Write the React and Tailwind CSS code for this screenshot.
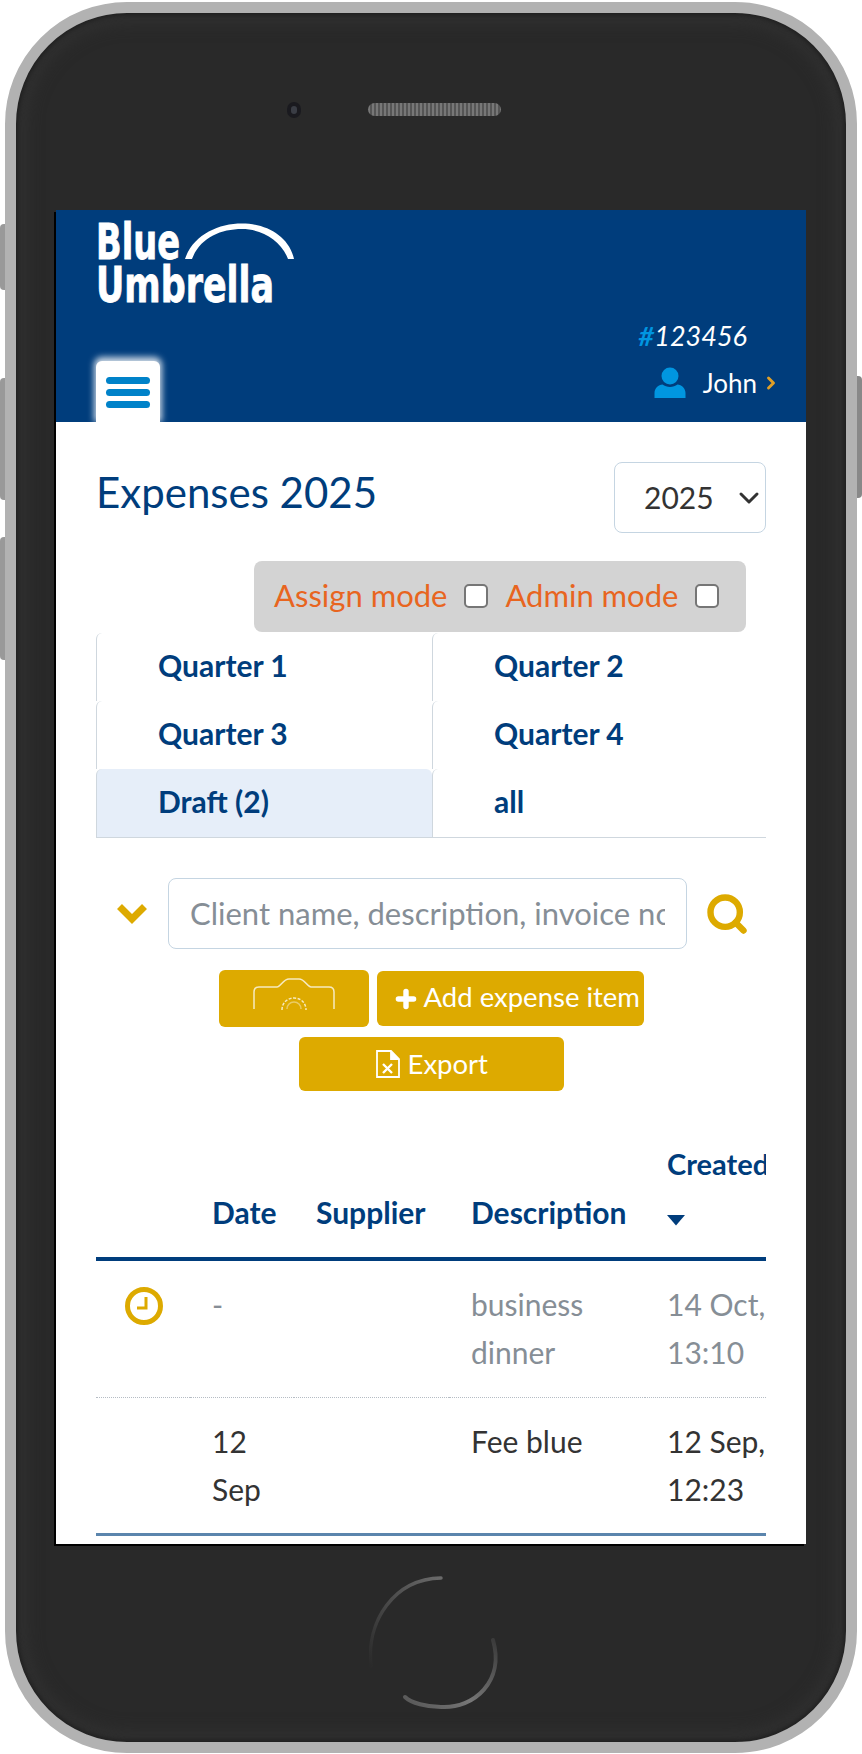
import { ChevronDown, Plus, Search } from "lucide-react";

const font = { fontFamily: '"Lato", "Noto Sans", sans-serif' };

function Logo() {
  return (
    <svg width="200" height="82" viewBox="0 0 200 82" className="block overflow-visible" aria-label="Blue Umbrella">
      <text x="0" y="36" fontFamily="Liberation Sans Narrow, DejaVu Sans Condensed, Liberation Sans" fontWeight="700" fontSize="49" fill="#fff" stroke="#fff" strokeWidth="0.8" textLength="84" lengthAdjust="spacingAndGlyphs">Blue</text>
      <text x="0" y="79" fontFamily="Liberation Sans Narrow, DejaVu Sans Condensed, Liberation Sans" fontWeight="700" fontSize="49" fill="#fff" stroke="#fff" strokeWidth="0.8" textLength="178" lengthAdjust="spacingAndGlyphs">Umbrella</text>
      <path d="M89 36C97 12 122 0.5 146 0.5C170 0.5 193 13 198 36H192C185 17 165 6 146 6C124 6 104 15 96 36Z" fill="#fff" />
    </svg>
  );
}

function Hamburger() {
  return (
    <div className="flex h-[61px] w-16 flex-col gap-[5px] rounded-t-md bg-white px-2.5 pt-4 shadow-[0_-2px_6px_2px_rgba(255,255,255,0.8)]">
      <div className="h-[7px] rounded-full bg-[#0082c9]" />
      <div className="h-[7px] rounded-full bg-[#0082c9]" />
      <div className="h-[7px] rounded-full bg-[#0082c9]" />
    </div>
  );
}

function UserIcon() {
  return (
    <svg width="32" height="32" viewBox="0 0 32 32" fill="#0096e0">
      <circle cx="16" cy="9" r="8.5" />
      <path d="M0.5 31v-5c0-5 4-8 8-8.5 2 1.6 4.800 2.500 7.500 2.500s5.500-.9 7.500-2.500c4 .5 8 3.500 8 8.500v5z" />
    </svg>
  );
}

function Tab({ label, active }) {
  return (
    <div className={`flex h-[68px] items-center rounded-tl-md border-l border-[#cfd7de] pb-[3px] pl-[61px] text-[30px] font-bold text-[#003d7c] ${active ? "rounded-t-md bg-[#e6eef9]" : ""}`}>
      {label}
    </div>
  );
}

function CameraIcon() {
  return (
    <svg width="82" height="34" viewBox="0 0 82 34" fill="none" stroke="#fff" strokeOpacity="0.75" strokeWidth="1.500">
      <path d="M1 31V14c0-3 1.500-5 5-5h18c4 0 6-8 12-8h10c6 0 8 8 12 8h18c3 0 5 2 5 5v17" />
      <path d="M29 32c0-7 5-12 12-12s12 5 12 12" strokeDasharray="3 1.500" />
      <path d="M34 31c0-4 3-7 7-7s7 3 7 7" strokeOpacity="0.4" />
    </svg>
  );
}

function FileIcon() {
  return (
    <svg width="24" height="28" viewBox="0 0 24 28" fill="none" stroke="#fff" strokeWidth="1.800">
      <path d="M1 1h14l8 8v18H1z" />
      <path d="M15 1v8h8" fill="#fff" />
      <path d="M7 14l9 9M16 14l-9 9" strokeWidth="2.400" />
    </svg>
  );
}

function ClockIcon() {
  return (
    <svg width="38" height="38" viewBox="0 0 38 38" fill="none" stroke="#ddaa00" className="ml-[7px] mt-[7px]">
      <circle cx="19" cy="19" r="16.500" strokeWidth="5" />
      <path d="M21 10v11h-9" strokeWidth="3" />
    </svg>
  );
}

function HomeButton() {
  return (
    <svg width="132" height="134" viewBox="0 0 132 134" fill="none" strokeLinecap="round">
      <defs>
        <linearGradient id="homeA" x1="0" y1="1" x2="1" y2="0">
          <stop offset="0" stopColor="#2a2a2a" />
          <stop offset="1" stopColor="#6a6a6a" />
        </linearGradient>
        <linearGradient id="homeB" x1="1" y1="0" x2="0" y2="1">
          <stop offset="0" stopColor="#3a3a3a" />
          <stop offset="0.6" stopColor="#777" />
          <stop offset="1" stopColor="#555" />
        </linearGradient>
      </defs>
      <path d="M2 90C-3 45 25 3 72 2" stroke="url(#homeA)" strokeWidth="3.500" />
      <path d="M124 64C136 105 105 133 72 131C58 131 42 127 36 121" stroke="url(#homeB)" strokeWidth="4" />
    </svg>
  );
}

const cell = "px-[22px] align-top";
const head = "border-b-4 border-[#003d7c] pb-[21px] pl-[22px] pr-[22px] align-bottom text-left font-bold leading-[48px] text-[#003d7c]";

export default function App() {
  return (
    <div className="relative h-[1754px] w-[862px] bg-white" style={font}>
      {/* side buttons */}
      <div className="absolute left-0 top-[224px] h-[66px] w-[6px] rounded-l-sm bg-[#999]" />
      <div className="absolute left-0 top-[378px] h-[122px] w-[6px] rounded-l-sm bg-[#999]" />
      <div className="absolute left-0 top-[537px] h-[123px] w-[6px] rounded-l-sm bg-[#999]" />
      <div className="absolute right-0 top-[376px] h-[122px] w-[8px] rounded-r-sm bg-[#888]" />

      {/* phone body */}
      <div className="absolute left-[5px] top-[2px] h-[1751px] w-[852px] rounded-[122px] border-[11px] border-[#b2b2b2] bg-[#292929] shadow-[inset_0_0_5px_2px_#1e1e1e,inset_0_0_18px_8px_#333]">
        <div className="flex h-[197px] items-start justify-center pr-[74px] pt-[88px]">
          <div className="mr-[67px] mt-[1px] h-[16px] w-[14px] rounded-full bg-[#1a1a1f] p-[4px]">
            <div className="h-full w-full rounded-full bg-[#3a3d45]" />
          </div>
          <div className="mt-[2px] h-[13px] w-[133px] rounded-full bg-[repeating-linear-gradient(90deg,#777_0,#777_2px,#555_2px,#555_4px)]" />
        </div>

        {/* screen */}
        <div className="mx-[40px] h-[1334px] overflow-hidden bg-white shadow-[-2px_2px_0_#000]">
          <header className="flex h-[212px] justify-between bg-[#003d7c] pl-10 pr-[25px] pt-[13px]">
            <div className="flex flex-col justify-between">
              <Logo />
              <Hamburger />
            </div>
            <div className="flex flex-col items-end justify-end pb-[23px]">
              <div className="mr-[34px] text-[27px] italic leading-[36px] text-white">
                <span className="font-bold text-[#0096e0]">#</span>123456
              </div>
              <div className="mt-[13px] flex items-center">
                <UserIcon />
                <span className="ml-[17px] text-[26px] leading-8 text-white">John</span>
                <ChevronDown className="ml-[4px] -rotate-90 text-[#e09f27]" size={20} strokeWidth={3.500} />
              </div>
            </div>
          </header>

          <main className="px-10 pt-10">
            <div className="flex items-start justify-between">
              <h1 className="mt-[2px] text-[42px] font-normal leading-[56px] text-[#003d7c]">Expenses 2025</h1>
              <div className="flex h-[71px] w-[152px] items-center justify-between rounded-lg border border-[#c5d5e2] pl-[29px] text-[30px] text-[#333]">
                2025
                <ChevronDown size={32} strokeWidth={2.250} />
              </div>
            </div>

            <div className="mr-5 mt-7 flex justify-end">
              <div className="flex h-[71px] w-[492px] items-center rounded-lg bg-[#d3d3d3] pb-[2px] pl-5 text-[31px] text-[#e8651f]">
                <span>Assign mode</span>
                <span className="ml-[17px] h-6 w-6 rounded-[5px] border-2 border-[#767676] bg-white" />
                <span className="ml-[17px]">Admin mode</span>
                <span className="ml-[17px] h-6 w-6 rounded-[5px] border-2 border-[#767676] bg-white" />
              </div>
            </div>

            <div className="mt-px grid grid-cols-[336px_1fr] border-b border-[#cfd7de]">
              <Tab label="Quarter 1" />
              <Tab label="Quarter 2" />
              <Tab label="Quarter 3" />
              <Tab label="Quarter 4" />
              <Tab label="Draft (2)" active />
              <Tab label="all" />
            </div>

            <div className="mt-10 flex items-center">
              <svg width="30" height="20" viewBox="0 0 30 20" fill="none" stroke="#ddaa00" strokeWidth="7" className="ml-[21px] shrink-0">
                <path d="M2.500 2.500L15 15L27.500 2.500" />
              </svg>
              <div className="ml-[21px] flex h-[71px] w-[519px] shrink-0 items-center rounded-lg border border-[#c5d5e2] pl-[21px] pr-[21px]">
                <span className="min-w-0 overflow-hidden whitespace-nowrap text-[31px] text-[#868e96]">Client name, description, invoice no</span>
              </div>
              <Search className="ml-[18px] shrink-0 text-[#ddaa00]" size={44} strokeWidth={3.500} />
            </div>

            <div className="mt-[21px] flex items-center justify-center gap-2">
              <button className="flex h-[57px] w-[150px] items-start justify-center rounded-md bg-[#ddaa00] pt-[8px]">
                <CameraIcon />
              </button>
              <button className="flex h-[55px] w-[267px] items-center rounded-md bg-[#ddaa00] pl-4 text-[27.500px] text-white">
                <Plus size={26} strokeWidth={5} />
                <span className="mb-[3px] ml-[5px]">Add expense item</span>
              </button>
            </div>
            <div className="mt-[10px] flex justify-center">
              <button className="flex h-[54px] w-[265px] items-center rounded-md bg-[#ddaa00] pl-[77px] text-[27.500px] text-white">
                <FileIcon />
                <span className="mb-[1px] ml-2">Export</span>
              </button>
            </div>

            <div className="mt-[49px] w-[670px] overflow-hidden">
              <table className="w-[800px] table-fixed border-collapse">
                <thead>
                  <tr>
                    <th className={`${head} w-[94px] text-[30px]`} />
                    <th className={`${head} w-[104px] text-[30px]`}>Date</th>
                    <th className={`${head} w-[155px] text-[30px]`}>Supplier</th>
                    <th className={`${head} w-[196px] text-[30px]`}>Description</th>
                    <th className={`${head} text-[29px]`}>
                      Created
                      <div className="h-12 pt-[27px]">
                        <svg width="18" height="11" viewBox="0 0 18 11" fill="#003d7c" className="block">
                          <path d="M0 0h18l-9 10.500z" />
                        </svg>
                      </div>
                    </th>
                  </tr>
                </thead>
                <tbody className="text-[30px] leading-[48px]">
                  <tr className="border-b border-dotted border-[#b5bcc4] text-[#868e96]">
                    <td className={`${cell} pb-[21px] pt-[19px]`}>
                      <ClockIcon />
                    </td>
                    <td className={`${cell} pt-[19px]`}>-</td>
                    <td className={cell} />
                    <td className={`${cell} pb-[21px] pt-[19px]`}>business dinner</td>
                    <td className={`${cell} pb-[21px] pt-[19px]`}>14 Oct,<br />13:10</td>
                  </tr>
                  <tr className="border-b-[3px] border-[#5b85ad] text-[#333]">
                    <td className={cell} />
                    <td className={`${cell} pb-[20px] pt-[19px]`}>12 Sep</td>
                    <td className={cell} />
                    <td className={`${cell} pt-[19px]`}>Fee blue</td>
                    <td className={`${cell} pb-[20px] pt-[19px]`}>12 Sep,<br />12:23</td>
                  </tr>
                </tbody>
              </table>
            </div>
          </main>
        </div>

        <div className="flex justify-center pl-[8px] pt-[32px]">
          <HomeButton />
        </div>
      </div>
    </div>
  );
}
